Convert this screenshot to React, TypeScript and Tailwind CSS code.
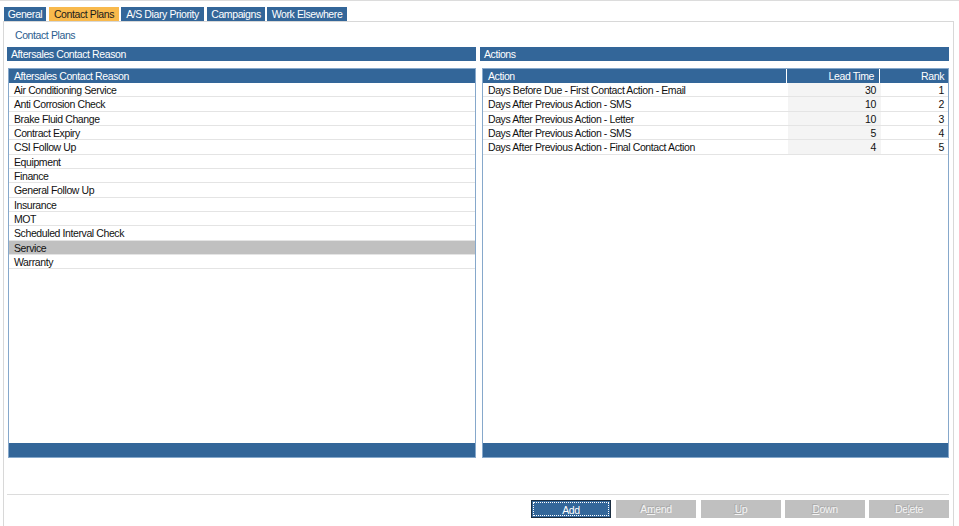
import React from 'react';

const tabs = [
    { label: 'General', width: 'w-[42px]' },
    { label: 'Contact Plans', width: 'w-[70px]', active: true },
    { label: 'A/S Diary Priority', width: 'w-[83px]' },
    { label: 'Campaigns', width: 'w-[58px]' },
    { label: 'Work Elsewhere', width: 'w-[80px]' },
];

const reasons = [
    'Air Conditioning Service',
    'Anti Corrosion Check',
    'Brake Fluid Change',
    'Contract Expiry',
    'CSI Follow Up',
    'Equipment',
    'Finance',
    'General Follow Up',
    'Insurance',
    'MOT',
    'Scheduled Interval Check',
    'Service',
    'Warranty',
];

const actions = [
    { action: 'Days Before Due - First Contact Action - Email', lead: 30, rank: 1 },
    { action: 'Days After Previous Action - SMS', lead: 10, rank: 2 },
    { action: 'Days After Previous Action - Letter', lead: 10, rank: 3 },
    { action: 'Days After Previous Action - SMS', lead: 5, rank: 4 },
    { action: 'Days After Previous Action - Final Contact Action', lead: 4, rank: 5 },
];

const SectionBar: React.FC<{ title: string }> = ({ title }) => (
    <div className="h-[14px] bg-[#336699] text-white pl-[4px] leading-[14px]">{title}</div>
);

const DisabledButton: React.FC<{ before: string; key_: string; after: string; gap?: string }> = ({ before, key_, after, gap = 'ml-[4px]' }) => (
    <button className={`${gap} w-[80px] h-[18px] bg-[#c0c0c0] text-[#f4f4f4] [text-shadow:-1px_-1px_0_#a8a8a8] leading-[18px]`}>
        {before}<span className="underline">{key_}</span>{after}
    </button>
);

export default function App() {
    const selected = 'Service';

    return (
        <div className="w-[959px] h-[526px] bg-white overflow-hidden text-[10.5px] tracking-[-0.4px] text-[#111111] font-['Liberation_Sans',Arial,sans-serif]">
            <div className="h-px bg-[#dcdcdc]" />
            <div className="flex pl-[4px] pt-[6px] h-[20px]">
                {tabs.map((tab, i) => (
                    <div
                        key={tab.label}
                        className={`${tab.width} h-[14px] leading-[14px] text-center whitespace-nowrap ${i > 0 ? (i % 2 === 0 ? 'ml-[2px]' : 'ml-[3px]') : ''} ${tab.active ? 'bg-[#f8b94c] text-[#1a1a1a]' : 'bg-[#336699] text-white'}`}
                    >
                        {tab.label}
                    </div>
                ))}
            </div>
            <div className="ml-[3px] w-[951px] h-[505px] border-t border-l border-r border-[#d8d8d8] pl-[3px] pr-[4px]">
                <div className="h-[25px] pl-[8px] pt-[6px] text-[#2b5d8e] leading-[14px]">Contact Plans</div>
                <div className="flex gap-[4px]">
                    <div className="w-[470px]">
                        <SectionBar title="Aftersales Contact Reason" />
                        <div className="ml-[1px] mt-[7px] h-[390px] border border-[#86a8cb] flex flex-col">
                            <div className="h-[14px] bg-[#336699] text-white pl-[5px] leading-[14px]">Aftersales Contact Reason</div>
                            <div className="flex-1">
                                {reasons.map(r => (
                                    <div
                                        key={r}
                                        className={`h-[14.33px] leading-[15px] pl-[5px] border-b border-[#e4e4e4] ${r === selected ? 'bg-[#c0c0c0]' : ''}`}
                                    >
                                        {r}
                                    </div>
                                ))}
                            </div>
                            <div className="h-[14px] bg-[#336699]" />
                        </div>
                    </div>
                    <div className="w-[470px]">
                        <SectionBar title="Actions" />
                        <div className="ml-[2px] mt-[7px] h-[390px] border border-[#86a8cb] flex flex-col">
                            <div className="flex h-[14px] bg-[#336699] text-white leading-[14px]">
                                <div className="w-[304px] pl-[5px] border-r border-white">Action</div>
                                <div className="w-[93px] pr-[5px] text-right border-r border-white">Lead Time</div>
                                <div className="flex-1 pr-[4px] text-right">Rank</div>
                            </div>
                            <div className="flex-1">
                                {actions.map((a, i) => (
                                    <div key={i} className="flex h-[14.33px] leading-[15px] border-b border-[#e4e4e4]">
                                        <div className="w-[305px] pl-[5px]">{a.action}</div>
                                        <div className="w-[93px] pr-[5px] text-right bg-[#f4f4f4]">{a.lead}</div>
                                        <div className="flex-1 pr-[4px] text-right">{a.rank}</div>
                                    </div>
                                ))}
                            </div>
                            <div className="h-[14px] bg-[#336699]" />
                        </div>
                    </div>
                </div>
                <div className="mt-[36px] border-t border-[#dcdcdc] pt-[5px] flex justify-end">
                    <button className="w-[80px] h-[18px] bg-[#336699] border border-[#1b2d40] text-white leading-[14px] p-[1px]">
                        <span className="block h-full w-full border border-dotted border-white">Add</span>
                    </button>
                    <DisabledButton before="A" key_="m" after="end" gap="ml-[5px]" />
                    <DisabledButton before="" key_="U" after="p" gap="ml-[5px]" />
                    <DisabledButton before="" key_="D" after="own" />
                    <DisabledButton before="De" key_="l" after="ete" />
                </div>
            </div>
        </div>
    );
}
